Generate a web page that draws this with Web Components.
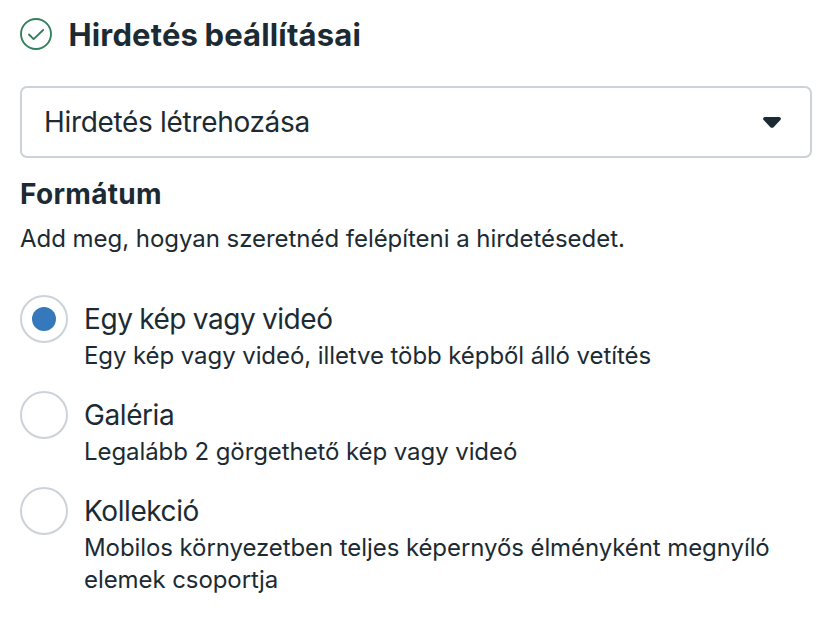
<!DOCTYPE html>
<html lang="hu"><head><meta charset="utf-8"><title>Hirdetés beállításai</title>
<style>html,body{margin:0;background:#fff}</style></head><body>
<ad-setup></ad-setup>
<script>
const define=(name,html)=>{const t=document.createElement('template');t.innerHTML=html;
customElements.define(name,class extends HTMLElement{constructor(){super();this.attachShadow({mode:'open'}).append(t.content.cloneNode(true));}});};
define('section-title',`<style>:host{display:flex;align-items:center;gap:16px;height:32px}svg{display:block;flex:none}
h1{margin:0;padding:2px 0 0 .5px;font:750 31px/32px Inter,sans-serif;letter-spacing:.15px;word-spacing:-1px;white-space:nowrap}</style>
<svg width="32" height="32" viewBox="0 0 32 32" fill="none" stroke="#34805c" stroke-width="1.9" stroke-linecap="round" stroke-linejoin="round"><circle cx="16" cy="16" r="15"/><path d="M9 16.5l4.6 4.6L23.2 12"/></svg><h1><slot></slot></h1>`);
define('select-box',`<style>:host{display:flex;align-items:center;justify-content:space-between;box-sizing:border-box;height:72px;border:2px solid #cbd2d9;border-radius:7px;padding:0 29px 0 22px}
span{font-size:28px;line-height:34px;letter-spacing:-.32px;white-space:nowrap}svg{display:block;margin-top:1px}</style>
<span><slot></slot></span><svg width="18" height="11" viewBox="0 0 18 11"><path d="M1.6 0h14.8q2.4.8 1 2.9L10.8 10q-1.8 1.7-3.6 0L.6 2.9Q-.8.8 1.6 0z" fill="#1c2b33"/></svg>`);
define('radio-option',`<style>:host{display:flex;gap:16px;align-items:flex-start}
i{box-sizing:border-box;width:48px;height:48px;border:2px solid #cbd2d9;border-radius:50%;flex:none;display:grid;place-items:center}
:host([checked]) i::after{content:"";width:24px;height:24px;border-radius:50%;background:#3578bb}
.text{display:block;padding-top:6px}.name{font-size:28px;line-height:36px;letter-spacing:-.42px;word-spacing:-.8px;white-space:nowrap}.desc{font-size:24px;line-height:32px;letter-spacing:-.08px;margin-top:3px;white-space:nowrap}</style>
<i></i><div class="text"><div class="name"><slot name="name"></slot></div><div class="desc"><slot></slot></div></div>`);
define('ad-setup',`<style>:host{display:block;box-sizing:border-box;width:826px;height:624px;padding:18px 14px 0 20px;color:#1c2b33;font-family:Inter,"Liberation Sans",sans-serif}
select-box{margin-top:36px}h2{font-size:28px;line-height:36px;font-weight:700;letter-spacing:.3px;margin:18px 0 0}p{font-size:24px;line-height:32px;letter-spacing:-.04px;margin:11px 0 0;white-space:nowrap}
.options{display:grid;grid-template-rows:96px 96px auto;margin-top:40px}</style>
<section-title>Hirdetés beállításai</section-title><select-box>Hirdetés létrehozása</select-box><h2>Formátum</h2><p>Add meg, hogyan szeretnéd felépíteni a hirdetésedet.</p>
<div class="options"><radio-option checked><span slot="name">Egy kép vagy videó</span>Egy kép vagy videó, illetve több képből álló vetítés</radio-option>
<radio-option><span slot="name">Galéria</span>Legalább 2 görgethető kép vagy videó</radio-option>
<radio-option><span slot="name">Kollekció</span>Mobilos környezetben teljes képernyős élményként megnyíló<br>elemek csoportja</radio-option></div>`);
</script></body></html>
